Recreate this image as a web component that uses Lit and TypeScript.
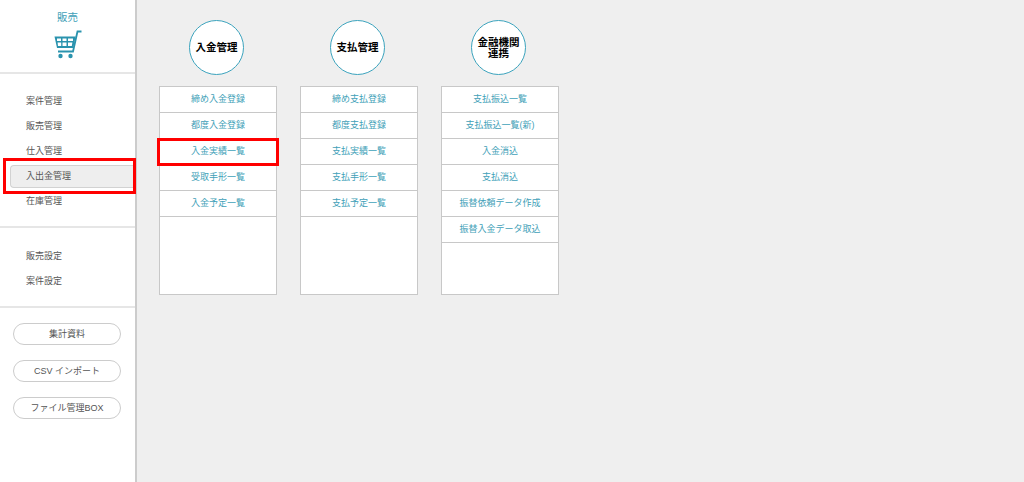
import { LitElement, html, css, svg } from "lit";
import { customElement } from "lit/decorators.js";

const columns = [
  { title: ["入金管理"], items: ["締め入金登録", "都度入金登録", "入金実績一覧", "受取手形一覧", "入金予定一覧"], hl: 2 },
  { title: ["支払管理"], items: ["締め支払登録", "都度支払登録", "支払実績一覧", "支払手形一覧", "支払予定一覧"], hl: -1 },
  { title: ["金融機関", "連携"], items: ["支払振込一覧", "支払振込一覧(新)", "入金消込", "支払消込", "振替依頼データ作成", "振替入金データ取込"], hl: -1 },
];

const cart = svg`<svg class="cart" width="28" height="29" viewBox="0 0 28 29" fill="none">
  <path d="M27.5 1.5 H23.5 L19 21.5 H4" stroke="#2a93ae" stroke-width="1.8"/>
  <path d="M0.5 6.5 H21.6 L19.3 18 H3 Z" fill="#2a93ae"/>
  <path d="M3 8.5h4v2.4h-4zM8.5 8.5h4v2.4h-4zM14 8.5h5v2.4h-5zM3.6 12.5h3.6v3.4h-3.2zM8.5 12.5h4v3.4h-4zM14 12.5h4.4l-.6 3.4h-3.8z" fill="#fff"/>
  <circle cx="6.5" cy="26" r="2.2" fill="#2a93ae"/><circle cx="16.5" cy="26" r="2.2" fill="#2a93ae"/>
</svg>`;

@customElement("app-root")
export class AppRoot extends LitElement {
  static styles = css`
    :host { display: block; width: 1024px; height: 482px; overflow: hidden; background: #efefef;
      font-family: "Liberation Sans", "Noto Sans CJK JP", sans-serif; font-size: 9px; }
    .page { display: flex; height: 482px; }
    .side { width: 135px; flex: none; background: #fff; border-right: 2px solid #ccc; display: flex; flex-direction: column; }
    .brand { height: 72px; flex: none; display: flex; flex-direction: column; align-items: center; border-bottom: 2px solid #e6e6e6; color: #3f9fb8; font-size: 10.5px; }
    .brand span { margin-top: 11px; line-height: 13px; }
    .cart { margin-top: 6px; }
    .nav { display: flex; flex-direction: column; padding: 14px 0 13px 10px; border-bottom: 2px solid #e6e6e6; }
    .nav.two { padding: 15px 0 13px 10px; }
    .nav a { height: 25px; line-height: 25px; padding-left: 15px; color: #555; box-sizing: border-box; border: 1px solid transparent; border-right: 0; }
    .nav a.on { background: #eee; border-color: #d2d2d2; border-radius: 4px 0 0 4px; height: 23px; line-height: 21px; margin-top: 2px; }
    .btns { display: flex; flex-direction: column; gap: 14.5px; padding: 14.5px 14px 0 13px; }
    .btns div { height: 22.5px; line-height: 20.5px; box-sizing: border-box; border: 1px solid #ccc; border-radius: 12px; text-align: center; color: #555; }
    .main { display: flex; gap: 23px; padding: 20px 0 0 22px; }
    .col { width: 118px; display: flex; flex-direction: column; align-items: center; }
    .circle { width: 55px; height: 55px; margin-right: 3px; box-sizing: border-box; border-radius: 50%; border: 1.5px solid #3ba3bd; background: #fff; color: #000;
      display: flex; flex-direction: column; align-items: center; justify-content: center; font-weight: 700; font-size: 10.5px; line-height: 10.5px; }
    .list { margin-top: 11px; width: 100%; height: 209px; box-sizing: border-box; background: #fff; border: 1px solid #c8c8c8; display: flex; flex-direction: column; }
    .row { position: relative; height: 26px; flex: none; box-sizing: border-box; border-bottom: 1px solid #c8c8c8; text-align: center; line-height: 25px; color: #3f9fb8; }
    .mark { position: absolute; border: 3px solid #f00; box-sizing: border-box; pointer-events: none; }
    .mark.row-mark { left: -3px; right: -3px; top: -1px; height: 28px; }
    .mark.nav-mark { left: 3px; top: 158px; width: 133px; height: 36px; }
  `;

  render() {
    return html`<div class="page">
      <aside class="side">
        <div class="brand"><span>販売</span>${cart}</div>
        <nav class="nav">
          <a>案件管理</a><a>販売管理</a><a>仕入管理</a><a class="on">入出金管理</a><a>在庫管理</a>
        </nav>
        <nav class="nav two"><a>販売設定</a><a>案件設定</a></nav>
        <div class="btns"><div>集計資料</div><div>CSV インポート</div><div>ファイル管理BOX</div></div>
      </aside>
      <main class="main">
        ${columns.map((c) => html`<section class="col">
          <div class="circle">${c.title.map((t) => html`<span>${t}</span>`)}</div>
          <div class="list">
            ${c.items.map((it, i) => html`<div class="row">${it}${i === c.hl ? html`<div class="mark row-mark"></div>` : ""}</div>`)}
          </div>
        </section>`)}
      </main>
      <div class="mark nav-mark"></div>
    </div>`;
  }
}
